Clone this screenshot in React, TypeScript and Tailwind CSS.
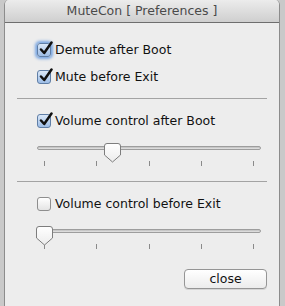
import React from "react";

const font = { fontFamily: '"DejaVu Sans", "Liberation Sans", sans-serif' };

function CheckBox({ checked, focused }: { checked: boolean; focused?: boolean }) {
  return (
    <div
      className={`relative w-[14px] h-[14px] shrink-0 rounded-[3px] border ${
        checked
          ? "border-[#5f7ea6] bg-gradient-to-b from-[#dbe8f8] to-[#9dbde6]"
          : "border-[#8e8e8e] bg-gradient-to-b from-[#ffffff] to-[#e4e4e4]"
      } ${focused ? "shadow-[0_0_3px_2px_#79a6e2]" : ""}`}
    >
      {checked && (
        <svg
          className="absolute left-[1px] -top-[3px]"
          width="14"
          height="15"
          viewBox="0 0 14 15"
        >
          <path
            d="M2 8.5 L5.2 12 L12.5 1.5"
            fill="none"
            stroke="#111"
            strokeWidth="2.5"
            strokeLinecap="round"
            strokeLinejoin="round"
          />
        </svg>
      )}
    </div>
  );
}

function Option({ label, checked, focused }: { label: string; checked: boolean; focused?: boolean }) {
  return (
    <div className="flex items-center gap-[4px] pl-[20px] h-[14px]">
      <CheckBox checked={checked} focused={focused} />
      <span className="text-[12.5px] leading-[14px] text-[#111] whitespace-nowrap">{label}</span>
    </div>
  );
}

function Slider({ value }: { value: number }) {
  // value 0..4 = tick index
  const left = value * 52.5 - 1;
  return (
    <div className="relative ml-[20px] w-[224px] pt-[5px]">
      <div className="h-[4px] rounded-full border border-[#9d9d9d] bg-gradient-to-b from-[#bdbdbd] to-[#e6e6e6]" />
      <div className="mt-[11px] h-[5px] px-[7px] flex justify-between">
        {[0, 1, 2, 3, 4].map((i) => (
          <div key={i} className="w-px h-[5px] bg-[#8a8a8a]" />
        ))}
      </div>
      <svg
        className="absolute top-[2px]"
        style={{ left }}
        width="17"
        height="20"
        viewBox="0 0 17 20"
      >
        <defs>
          <linearGradient id="thumb" x1="0" y1="0" x2="0" y2="1">
            <stop offset="0" stopColor="#ffffff" />
            <stop offset="1" stopColor="#ececec" />
          </linearGradient>
        </defs>
        <path
          d="M3 0.5 H14 A2.5 2.5 0 0 1 16.5 3 V12 L8.5 19 L0.5 12 V3 A2.5 2.5 0 0 1 3 0.5 Z"
          fill="url(#thumb)"
          stroke="#7d7d7d"
          strokeWidth="1"
        />
      </svg>
    </div>
  );
}

export default function App() {
  return (
    <div className="w-[285px] h-[306px] bg-[#c9c9c9] overflow-hidden" style={font}>
      <div className="ml-[4px] w-[276px] h-[306px] flex flex-col bg-[#ededed] border-x border-[#8c8c8c] rounded-t-[5px] overflow-hidden">
        <div className="h-[23px] shrink-0 flex items-center justify-center border-b border-[#6e6e6e] bg-gradient-to-b from-[#ececec] to-[#cfcfcf]">
          <span className="text-[12.5px] text-[#4a4a4a] whitespace-nowrap">MuteCon [ Preferences ]</span>
        </div>
        <div className="px-[12px] flex flex-col">
          <div className="mt-[20px]">
            <Option label="Demute after Boot" checked focused />
          </div>
          <div className="mt-[13px]">
            <Option label="Mute before Exit" checked />
          </div>
          <div className="mt-[14px] h-px bg-[#a3a3a3]" />
          <div className="mt-[15px]">
            <Option label="Volume control after Boot" checked />
          </div>
          <div className="mt-[13px]">
            <Slider value={1.3} />
          </div>
          <div className="mt-[15px] h-px bg-[#a3a3a3]" />
          <div className="mt-[15px]">
            <Option label="Volume control before Exit" checked={false} />
          </div>
          <div className="mt-[13px]">
            <Slider value={0} />
          </div>
          <div className="mt-[20px] flex justify-end">
            <button className="w-[83px] h-[20px] rounded-[4px] border border-[#959595] bg-gradient-to-b from-[#ffffff] to-[#ececec] text-[12.5px] leading-[18px] text-[#111] shadow-[0_1px_0_#d5d5d5]">
              close
            </button>
          </div>
        </div>
      </div>
    </div>
  );
}
